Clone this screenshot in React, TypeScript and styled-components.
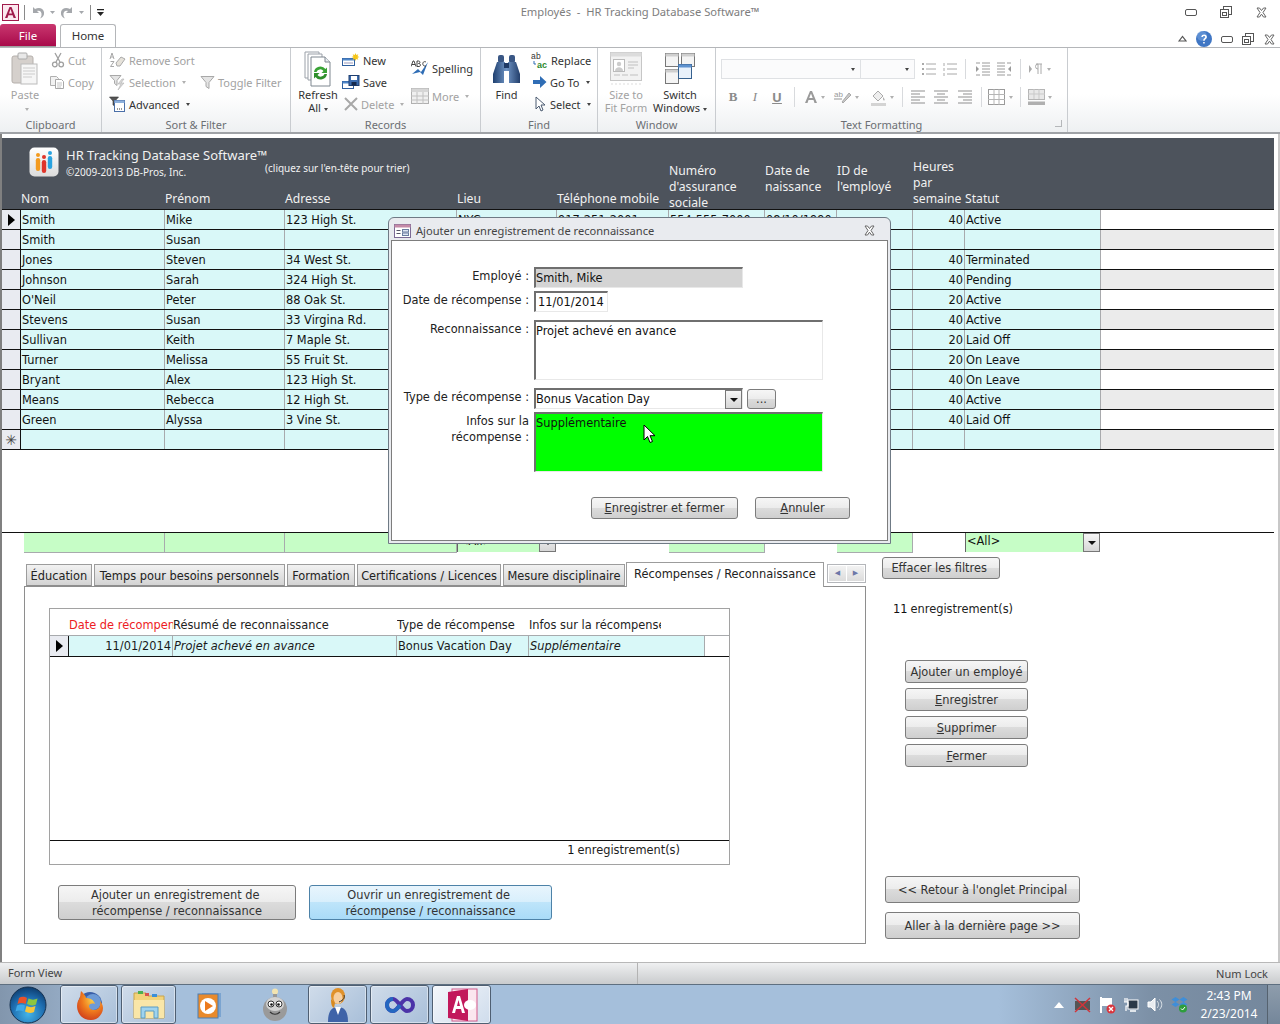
import React from "react";
import styled, { createGlobalStyle } from "styled-components";

const COLUMNS = "19px 144px 120px 172px 100px 112px 96px 72px 76px 52px 136px 1fr";
const FONT = `"DejaVu Sans", "Noto Sans", sans-serif`;
const UI_FONT = `"Noto Sans", "DejaVu Sans", sans-serif`;

const GlobalStyle = createGlobalStyle`
  html, body { margin: 0; padding: 0; background: #fff; }
  * { box-sizing: border-box; }
  body { font-family: ${FONT}; font-size: 11.4px; color: #1a1a1a; }
`;

const Screen = styled.div`
  position: relative;
  width: 1280px;
  height: 1024px;
  overflow: hidden;
  display: flex;
  flex-direction: column;
  background: #fff;
`;

/* ---------- title bar + ribbon ---------- */

const TitleBar = styled.div`
  height: 24px;
  flex: none;
  display: grid;
  grid-template-columns: 200px 1fr 200px;
  align-items: center;
`;

const Qat = styled.div`
  display: flex;
  align-items: center;
  padding-left: 2px;
  gap: 3px;
`;

const QatSep = styled.span`
  width: 1px;
  height: 15px;
  background: #8a8a8a;
  margin: 0 2px;
`;

const Title = styled.div`
  text-align: center;
  color: #7d7d7d;
  font-family: ${UI_FONT};
  font-size: 11.2px;
  padding-bottom: 2px;
`;

const WinControls = styled.div<{ $gap: number; $right: number }>`
  display: flex;
  justify-content: flex-end;
  align-items: center;
  gap: ${(p) => p.$gap}px;
  padding-right: ${(p) => p.$right}px;
`;

const TabRow = styled.div`
  height: 23px;
  flex: none;
  display: flex;
  align-items: flex-end;
  justify-content: space-between;
`;

const TabGroup = styled.div`
  display: flex;
  align-items: flex-end;
  height: 100%;
`;

const FileTab = styled.div`
  width: 56px;
  height: 23px;
  background: linear-gradient(#c9376f, #a80a4a);
  color: #fff;
  font-family: ${UI_FONT};
  font-size: 11.5px;
  border-radius: 3px 3px 0 0;
  text-align: center;
  line-height: 24px;
  margin-right: 4px;
  border-bottom: 1px solid #a0a0a0;
`;

const HomeTab = styled.div`
  width: 56px;
  height: 24px;
  background: #fff;
  border: 1px solid #b4b6b9;
  border-bottom: none;
  border-radius: 3px 3px 0 0;
  text-align: center;
  font-family: ${UI_FONT};
  font-size: 11.5px;
  line-height: 21px;
  color: #333;
  margin-bottom: -1px;
`;

const Ribbon = styled.div`
  height: 87px;
  flex: none;
  display: flex;
  font-family: ${UI_FONT};
  background: linear-gradient(#fff 55%, #eef0f2);
  border-top: 1px solid #b4b6b9;
  border-bottom: 2px solid #a0a3a7;
`;

const Group = styled.div<{ $w: number }>`
  width: ${(p) => p.$w}px;
  height: 84px;
  border-right: 1px solid #c9ccd0;
  display: flex;
  flex-direction: column;
  padding-top: 1px;
`;

const GroupBody = styled.div<{ $pad?: number }>`
  height: 67px;
  flex: none;
  display: flex;
  padding-left: ${(p) => p.$pad ?? 0}px;
`;

const GroupLabel = styled.div<{ $shift?: number }>`
  height: 16px;
  text-align: center;
  color: #6c6f73;
  font-size: 11px;
  line-height: 17px;
  padding-right: ${(p) => p.$shift ?? 0}px;
  position: relative;
`;

const BigBtn = styled.div<{ $w: number; $off?: boolean }>`
  width: ${(p) => p.$w}px;
  display: flex;
  flex-direction: column;
  align-items: center;
  font-size: 11px;
  line-height: 13px;
  color: ${(p) => (p.$off ? "#a2a2a2" : "#333")};
  text-align: center;
  white-space: nowrap;
`;

const BigIcon = styled.div`
  height: 39px;
  display: flex;
  align-items: center;
  justify-content: center;
`;

const SmallCol = styled.div<{ $w: number; $top?: number }>`
  width: ${(p) => p.$w}px;
  padding-top: ${(p) => p.$top ?? 0}px;
  display: flex;
  flex-direction: column;
`;

const SmallBtn = styled.div<{ $off?: boolean; $h?: number; $indent?: number }>`
  height: ${(p) => p.$h ?? 22}px;
  padding-left: ${(p) => p.$indent ?? 0}px;
  display: flex;
  align-items: center;
  gap: 3px;
  font-size: 11px;
  white-space: nowrap;
  color: ${(p) => (p.$off ? "#a2a2a2" : "#333")};
`;

const Caret = styled.span<{ $off?: boolean }>`
  display: inline-block;
  width: 0;
  height: 0;
  margin-left: 3px;
  border-left: 2.5px solid transparent;
  border-right: 2.5px solid transparent;
  border-top: 3px solid ${(p) => (p.$off ? "#b0b0b0" : "#444")};
  vertical-align: middle;
`;

const FormatCol = styled.div`
  display: flex;
  flex-direction: column;
  padding: 10px 0 0 5px;
  gap: 8px;
`;

const FormatRow = styled.div`
  display: flex;
  align-items: center;
  height: 20px;
`;

const FontBox = styled.div<{ $w: number }>`
  width: ${(p) => p.$w}px;
  height: 20px;
  border: 1px solid #dfe1e4;
  background: #fbfbfc;
  display: flex;
  align-items: center;
  justify-content: flex-end;
  padding-right: 5px;
  margin-right: -1px;
`;

const ToolSpace = styled.span<{ $w: number }>`
  width: ${(p) => p.$w}px;
  flex: none;
`;

const ToolSep = styled.span`
  width: 1px;
  height: 20px;
  background: #d8dadd;
`;

const ToolGlyph = styled.span<{ $w?: number; $serif?: boolean; $italic?: boolean; $under?: boolean }>`
  width: ${(p) => p.$w ?? 22}px;
  text-align: center;
  color: #8b8b8b;
  font-family: ${(p) => (p.$serif ? `"Liberation Serif", serif` : UI_FONT)};
  font-weight: ${(p) => (p.$italic ? 400 : 700)};
  font-style: ${(p) => (p.$italic ? "italic" : "normal")};
  text-decoration: ${(p) => (p.$under ? "underline" : "none")};
  font-size: 13px;
`;

const DialogLauncher = styled.span`
  position: absolute;
  right: 5px;
  top: 4px;
  width: 7px;
  height: 7px;
  border-right: 1px solid #b5b7ba;
  border-bottom: 1px solid #b5b7ba;
`;

/* ---------- main form ---------- */

const FormFrame = styled.div`
  flex: 1;
  min-height: 0;
  display: flex;
  flex-direction: column;
  padding: 4px 4px 0 0;
  border-left: 2px solid #808080;
  border-right: 2px solid #c8c8c8;
  background: #fff;
`;

const Header = styled.div`
  height: 72px;
  flex: none;
  display: grid;
  grid-template-columns: ${COLUMNS};
  grid-template-rows: 1fr;
  background: #4d535c;
  color: #f1f1f1;
`;

const Brand = styled.div`
  grid-column: 1 / 7;
  grid-row: 1;
  align-self: start;
  display: flex;
  padding: 9px 0 0 27px;
  font-family: ${UI_FONT};
`;

const BrandText = styled.div`
  width: 199px;
  margin-left: 7px;
  white-space: nowrap;
`;

const BrandName = styled.div`
  font-size: 13px;
  line-height: 17px;
`;

const BrandCopy = styled.div`
  font-size: 10px;
  line-height: 15px;
  margin-top: 1px;
`;

const SortHint = styled.div`
  font-size: 10px;
  margin-top: 14px;
  white-space: nowrap;
`;

const HeadLabel = styled.div<{ $col: number; $bottom: number }>`
  grid-column: ${(p) => p.$col};
  grid-row: 1;
  align-self: end;
  margin-bottom: ${(p) => p.$bottom}px;
  line-height: 16px;
  white-space: nowrap;
  font-family: ${UI_FONT};
  font-size: 12.2px;
`;

const Row = styled.div`
  display: grid;
  grid-template-columns: ${COLUMNS};
  height: 20px;
  flex: none;
  border-bottom: 1px solid #111;
`;

const RowHeadTop = styled(Row)`
  box-shadow: 0 -1px 0 #111;
`;

const Selector = styled.div`
  background: #e9ebf1;
  border-right: 1px solid #111;
  display: flex;
  align-items: center;
  justify-content: center;
  color: #444;
  font-size: 14px;
`;

const Cell = styled.div<{ $right?: boolean }>`
  background: #d9f8f8;
  border-right: 1px solid #a8aaad;
  padding: 0 1px;
  line-height: 21px;
  white-space: nowrap;
  overflow: hidden;
  text-align: ${(p) => (p.$right ? "right" : "left")};
  color: #111;
`;

const Filler = styled.div<{ $grey: boolean }>`
  background: ${(p) => (p.$grey ? "#ebebeb" : "#fff")};
`;

const Blank = styled.div`
  height: 82px;
  flex: none;
`;

const FilterRow = styled.div`
  display: grid;
  grid-template-columns: ${COLUMNS};
  height: 21px;
  flex: none;
  border-top: 1px solid #111;
`;

const FilterCell = styled.div<{ $col: number; $inset?: number }>`
  grid-column: ${(p) => p.$col};
  margin-left: ${(p) => p.$inset ?? 0}px;
  background: #c6fdc6;
  border-right: 1px solid #a8aaad;
  border-bottom: 1px solid #a8aaad;
`;

const FilterCombo = styled.div<{ $col: number }>`
  grid-column: ${(p) => p.$col};
  display: flex;
  background: #c6fdc6;
  border-left: 1px solid #666;
  height: 19px;
  line-height: 17px;
  padding-left: 1px;
  margin-right: 1px;
  justify-content: space-between;
  color: #111;
`;

const DropBtn = styled.span`
  width: 17px;
  height: 19px;
  border: 1px solid #777;
  background: linear-gradient(#f6f6f6, #d6d6d6);
  display: flex;
  align-items: center;
  justify-content: center;
  flex: none;
  &::after {
    content: "";
    border-left: 4px solid transparent;
    border-right: 4px solid transparent;
    border-top: 4px solid #111;
  }
`;

const Lower = styled.div`
  display: flex;
  padding: 4px 0 0 22px;
`;

const LeftPane = styled.div`
  width: 842px;
  padding-top: 4px;
  margin-right: 16px;
`;

const TabStrip = styled.div`
  height: 25px;
  display: flex;
  align-items: flex-end;
  padding-left: 2px;
  position: relative;
`;

const SheetTab = styled.div<{ $w: number }>`
  width: ${(p) => p.$w}px;
  height: 22px;
  margin-right: 2px;
  border: 1px solid #9c9c9c;
  border-bottom: 1px solid #8e8e8e;
  background: linear-gradient(#f2f2f2, #d4d4d4);
  text-align: center;
  line-height: 22px;
  white-space: nowrap;
  color: #222;
`;

const ActiveTab = styled.div<{ $w: number }>`
  width: ${(p) => p.$w}px;
  height: 25px;
  border: 1px solid #9c9c9c;
  border-bottom: none;
  background: #fff;
  text-align: center;
  line-height: 23px;
  margin-left: -1px;
  margin-bottom: -1px;
  position: relative;
  z-index: 1;
  white-space: nowrap;
  color: #222;
`;

const TabScroll = styled.div`
  display: flex;
  margin: 0 0 3px 3px;
  border: 1px solid #b4b6ba;
  padding: 1px;
  gap: 1px;
`;

const ScrollBtn = styled.span`
  width: 17px;
  height: 15px;
  background: linear-gradient(#f2f2f2, #dcdcdc);
  color: #6d78a8;
  font-size: 7px;
  text-align: center;
  line-height: 15px;
`;

const Panel = styled.div`
  height: 358px;
  border: 1px solid #8e8e8e;
  padding: 21px 0 0 24px;
`;

const SubForm = styled.div`
  width: 681px;
  height: 257px;
  border: 1px solid #a2a2a2;
  display: flex;
  flex-direction: column;
`;

const SubHead = styled.div`
  height: 27px;
  flex: none;
  display: flex;
  align-items: flex-end;
  border-bottom: 1px solid #a8aaad;
  padding-left: 19px;
  line-height: 20px;
`;

const SubLabel = styled.div<{ $w: number; $red?: boolean }>`
  width: ${(p) => p.$w}px;
  white-space: nowrap;
  overflow: hidden;
  color: ${(p) => (p.$red ? "#ed1c24" : "#222")};
`;

const SubRow = styled.div`
  height: 21px;
  flex: none;
  display: flex;
  border-bottom: 1px solid #111;
`;

const SubSel = styled.div`
  width: 19px;
  background: #e9ebf1;
  border-right: 1px solid #111;
  display: flex;
  align-items: center;
  justify-content: center;
`;

const SubCell = styled.div<{ $w: number; $right?: boolean; $italic?: boolean }>`
  width: ${(p) => p.$w}px;
  background: #d9f8f8;
  border-right: 1px solid #a8aaad;
  padding: 0 1px;
  line-height: 21px;
  white-space: nowrap;
  overflow: hidden;
  font-style: ${(p) => (p.$italic ? "italic" : "normal")};
  text-align: ${(p) => (p.$right ? "right" : "left")};
`;

const SubSpace = styled.div`
  flex: 1;
  border-bottom: 1px solid #111;
`;

const SubFoot = styled.div`
  height: 23px;
  flex: none;
  padding: 0 49px 0 0;
  text-align: right;
  line-height: 18px;
  color: #222;
`;

const RecordCount = styled.span`
  color: #111;
  margin-right: 3px;
`;

const Btn = styled.div<{ $w: number; $h: number; $blue?: boolean }>`
  width: ${(p) => p.$w}px;
  height: ${(p) => p.$h}px;
  flex: none;
  display: flex;
  align-items: center;
  justify-content: center;
  text-align: center;
  line-height: 16px;
  border-radius: 3px;
  color: #333;
  white-space: pre;
  border: 1px solid ${(p) => (p.$blue ? "#4d82a8" : "#7c7c7c")};
  background: ${(p) =>
    p.$blue
      ? "linear-gradient(#e8f5fd, #d8effc 48%, #bfe5fa 48%, #a9dbf8)"
      : "linear-gradient(#f6f6f6, #ececec 48%, #dcdcdc 48%, #cfcfcf)"};
`;

const ActionRow = styled.div`
  display: flex;
  gap: 13px;
  padding: 20px 0 0 9px;
`;

const RightPane = styled.div`
  display: flex;
  flex-direction: column;
`;

const CountLine = styled.div`
  margin: 21px 0 0 11px;
  line-height: 18px;
  color: #222;
`;

const StackCol = styled.div<{ $top: number; $left: number; $gap: number }>`
  display: flex;
  flex-direction: column;
  margin: ${(p) => p.$top}px 0 0 ${(p) => p.$left}px;
  gap: ${(p) => p.$gap}px;
`;

/* ---------- status + taskbar ---------- */

const StatusBar = styled.div`
  height: 22px;
  flex: none;
  display: flex;
  justify-content: space-between;
  align-items: center;
  padding: 0 12px 0 8px;
  font-family: ${UI_FONT};
  font-size: 11px;
  color: #444;
  border-top: 1px solid #b8b8b8;
  background: linear-gradient(#eff0f1, #c9cbcd);
`;

const StatusLeft = styled.div`
  width: 630px;
  height: 100%;
  line-height: 20px;
  border-right: 1px solid #b3b3b3;
`;

const Taskbar = styled.div`
  height: 40px;
  flex: none;
  display: flex;
  align-items: stretch;
  background: linear-gradient(90deg, #a5bfdb 0 78%, #7c90a6 90%, #74879c);
  border-top: 1px solid #5e6f80;
`;

const StartSlot = styled.div`
  width: 60px;
  display: flex;
  align-items: center;
  justify-content: center;
  padding-right: 4px;
  background: linear-gradient(90deg, #8296ad, #93a9c2);
`;

const TaskBtn = styled.div<{ $w: number; $gap?: number; $plain?: boolean; $active?: boolean }>`
  width: ${(p) => p.$w}px;
  margin-right: ${(p) => p.$gap ?? 3}px;
  display: flex;
  align-items: center;
  justify-content: center;
  border-radius: 3px;
  ${(p) =>
    p.$plain
      ? ""
      : `border: 1px solid #4f5f72; box-shadow: inset 0 0 0 1px rgba(255,255,255,.45);
         background: ${
           p.$active
             ? "linear-gradient(135deg,#f4f7fb,#cfdcec)"
             : "linear-gradient(135deg,#d0dcea,#a8bfd9)"
         };`}
`;

const Tray = styled.div`
  margin-left: auto;
  display: flex;
  align-items: center;
`;

const TrayIcon = styled.div<{ $w: number }>`
  width: ${(p) => p.$w}px;
  display: flex;
  justify-content: center;
`;

const Clock = styled.div`
  width: 76px;
  text-align: center;
  color: #fff;
  font-family: ${UI_FONT};
  font-size: 12px;
  line-height: 18px;
`;

const ShowDesktop = styled.div`
  width: 13px;
  align-self: stretch;
  border-left: 1px solid #55626f;
  background: linear-gradient(#8e9dac, #74869a);
`;

/* ---------- dialog ---------- */

const Dialog = styled.div`
  position: absolute;
  left: 388px;
  top: 217px;
  width: 503px;
  height: 327px;
  border: 1px solid #6f7a85;
  border-radius: 6px 6px 0 0;
  background: #e9ebef;
  padding: 0 2px 2px;
  display: flex;
  flex-direction: column;
`;

const DialogTitle = styled.div`
  height: 22px;
  flex: none;
  display: flex;
  align-items: center;
  padding: 3px 12px 0 3px;
  gap: 5px;
  color: #444;
  font-family: ${UI_FONT};
  font-size: 11.1px;
`;

const DialogName = styled.span`
  flex: 1;
`;

const DialogBody = styled.div`
  flex: 1;
  background: #fff;
  border: 1px solid #7d7d7d;
  padding-top: 26px;
  display: grid;
  grid-template-columns: 139px 1fr;
  align-content: start;
`;

const FieldLabel = styled.div<{ $top?: number }>`
  text-align: right;
  margin-top: ${(p) => p.$top ?? 0}px;
  padding: 1px 2px 0 0;
  line-height: 16px;
  white-space: pre-line;
  color: #222;
`;

const FieldWrap = styled.div<{ $top?: number }>`
  margin: ${(p) => p.$top ?? 0}px 0 0 3px;
  display: flex;
  gap: 4px;
`;

const Field = styled.div<{ $w: number; $h: number; $bg?: string; $bare?: boolean }>`
  width: ${(p) => p.$w}px;
  height: ${(p) => p.$h}px;
  background: ${(p) => p.$bg ?? "#fff"};
  border-style: solid;
  border-width: 2px 1px 1px 2px;
  border-color: #6f6f6f #e8e8e8 #e8e8e8 #6f6f6f;
  padding: 1px 0 0 ${(p) => (p.$bare ? 2 : 0)}px;
  line-height: 16px;
  color: #111;
  display: flex;
  justify-content: space-between;
`;

const FieldDrop = styled(DropBtn)`
  margin-top: -1px;
`;

const DotsBtn = styled(Btn)`
  margin-top: 1px;
  line-height: 12px;
`;

const DialogActions = styled.div`
  grid-column: 1 / 3;
  display: flex;
  gap: 17px;
  padding: 25px 0 0 199px;
`;

const CursorSlot = styled.div`
  position: absolute;
  left: 643px;
  top: 424px;
  line-height: 0;
`;

/* ---------- icons ---------- */

const AccessLogo = () => (
  <svg width="17" height="17" viewBox="0 0 17 17">
    <rect x="0.5" y="0.5" width="16" height="16" fill="#fbe8ef" stroke="#a01b4c" />
    <path d="M3 14 7.5 3h2L14 14h-2.4l-1-2.8H6.4L5.4 14zM7 9.4h3L8.5 5z" fill="#a01b4c" />
  </svg>
);

const UndoIcon = ({ flip }: { flip?: boolean }) => (
  <svg width="16" height="15" viewBox="0 0 16 15" style={flip ? { transform: "scaleX(-1)" } : undefined}>
    <path d="M3 2v6h6L7 6c3-1 5 1 4.500 4.500-.2 1-.7 2-1.500 3 3-1 4.500-3.500 4-6.500C13 3 9 2 5 4z" fill="#a5a8ac" />
  </svg>
);

const MiniCaret = () => (
  <svg width="7" height="5" viewBox="0 0 7 5">
    <path d="M1 1h5L3.500 4z" fill="#a5a8ac" />
  </svg>
);

const QatMenu = () => (
  <svg width="9" height="10" viewBox="0 0 9 10">
    <path d="M1 2h7v1.300H1zM1 5h7L4.500 9z" fill="#222" />
  </svg>
);

const MinGlyph = () => (
  <svg width="12" height="7" viewBox="0 0 12 7">
    <rect x="0.5" y="0.5" width="11" height="6" rx="1.500" fill="#fff" stroke="#555" />
  </svg>
);

const RestoreGlyph = () => (
  <svg width="12" height="12" viewBox="0 0 12 12">
    <rect x="3.500" y="0.500" width="8" height="8" fill="#fff" stroke="#555" />
    <rect x="0.500" y="3.500" width="8" height="8" fill="#fff" stroke="#555" />
    <rect x="2.500" y="6.500" width="4" height="3" fill="none" stroke="#555" />
  </svg>
);

const CloseGlyph = () => (
  <svg width="13" height="11" viewBox="0 0 13 11">
    <path d="M2 1h2.500l2 2.500 2-2.500H11L8 5.500l3 4.500H8.500l-2-2.800-2 2.800H2l3-4.500z" fill="#fff" stroke="#666" />
  </svg>
);

const HelpGlyph = () => (
  <svg width="16" height="16" viewBox="0 0 16 16">
    <circle cx="8" cy="8" r="8" fill="#3f76c4" />
    <circle cx="6" cy="5" r="5" fill="#7ba7e2" opacity=".5" />
    <path d="M5.300 6c0-3.300 5.600-3.300 5.600 0 0 2-2.200 2-2.200 3.800H7.200c0-2.500 2-2.500 2-3.800 0-1.300-2.300-1.300-2.300 0zM7.200 11h1.500v1.600H7.200z" fill="#fff" />
  </svg>
);

const CollapseGlyph = () => (
  <svg width="9" height="8" viewBox="0 0 9 8">
    <path d="M1 6 4.500 1.500 8 6z" fill="none" stroke="#555" strokeWidth="1.200" />
  </svg>
);

const PasteIcon = () => (
  <svg width="28" height="34" viewBox="0 0 28 34">
    <rect x="1" y="4" width="21" height="27" rx="2" fill="#d5d0cc" stroke="#b5b0ac" />
    <rect x="7" y="1" width="9" height="6" rx="1" fill="#e8e8e8" stroke="#aaa" />
    <rect x="10" y="12" width="16" height="20" fill="#f6f6f6" stroke="#bbb" />
    <path d="M12 16h12M12 19h12M12 22h12M12 25h9" stroke="#ccc" />
  </svg>
);

const ScissorsIcon = () => (
  <svg width="14" height="16" viewBox="0 0 14 16">
    <path d="M4 1l5 9M10 1 5 10" stroke="#a0a0a0" strokeWidth="1.300" fill="none" />
    <circle cx="3.800" cy="12.500" r="2.300" fill="none" stroke="#a0a0a0" strokeWidth="1.300" />
    <circle cx="10.200" cy="12.500" r="2.300" fill="none" stroke="#a0a0a0" strokeWidth="1.300" />
  </svg>
);

const CopyIcon = () => (
  <svg width="16" height="15" viewBox="0 0 16 15">
    <path d="M1.500 1.500h6l2 2v7h-8z" fill="#f2f2f2" stroke="#b0b0b0" />
    <path d="M6.500 4.500h6l2 2v7h-8z" fill="#fff" stroke="#a8a8a8" />
    <path d="M8 8h5M8 10h5M8 12h4" stroke="#c4c4c4" />
  </svg>
);

const RemoveSortIcon = () => (
  <svg width="17" height="17" viewBox="0 0 17 17">
    <path d="M1 7 3 1l2 6M1.800 5h2.400M1.500 9.500h3.500l-3.500 5h3.500" stroke="#a8a8a8" fill="none" />
    <path d="M7 11l5-6 4 2-5 7H8z" fill="#e6e2da" stroke="#aaa" />
  </svg>
);

const FilterGlyph = () => (
  <svg width="15" height="15" viewBox="0 0 15 15">
    <path d="M1 1.500h13L9 7.500v6l-3-2v-4z" fill="#e4e4e4" stroke="#a8a8a8" />
  </svg>
);

const SelectionIcon = () => (
  <svg width="17" height="17" viewBox="0 0 17 17">
    <path d="M1 1.500h11L8 6.500v5l-2.500-2V6.500z" fill="#e4e4e4" stroke="#a8a8a8" />
    <path d="M13 5 9 10h3l-3 6 6-7h-3l3-4z" fill="#d9d9d9" stroke="#b0b0b0" strokeWidth=".6" />
  </svg>
);

const AdvancedIcon = () => (
  <svg width="17" height="17" viewBox="0 0 17 17">
    <path d="M0.500 1h9L6 5v5L4 9V5z" fill="#555" stroke="#333" strokeWidth=".6" />
    <rect x="5.500" y="4.500" width="10" height="11" fill="#fff" stroke="#4a6fa8" />
    <rect x="5.500" y="4.500" width="10" height="2.500" fill="#8db0dc" />
    <path d="M8 13h1M10 13h1M12 13h1" stroke="#333" />
  </svg>
);

const RefreshIcon = () => (
  <svg width="28" height="36" viewBox="0 0 28 36">
    <path d="M1 1h14v26H1z" fill="#fff" stroke="#9aa0a8" />
    <path d="M4 3h14v26H4z" fill="#fff" stroke="#9aa0a8" />
    <path d="M7 6h14l5 5v24H7z" fill="#fff" stroke="#7f8790" />
    <path d="M21 6v5h5" fill="#e8ecf0" stroke="#7f8790" />
    <path d="M10 21a6.500 6.500 0 0 1 11.500-3l1.500-1.500v5.500h-5.500l2-2a4 4 0 0 0-7 1z" fill="#39a335" />
    <path d="M23 23a6.500 6.500 0 0 1-11.500 3L10 27.500V22h5.500l-2 2a4 4 0 0 0 7-1z" fill="#2f8f2c" />
  </svg>
);

const NewIcon = () => (
  <svg width="18" height="14" viewBox="0 0 18 14">
    <rect x="0.500" y="5.500" width="12" height="7" fill="#fff" stroke="#2f5f9e" />
    <rect x="0.500" y="5.500" width="12" height="2" fill="#4f86c8" />
    <path d="M2 10h9" stroke="#99b" />
    <path d="M13.500 0l.8 2 2-.8-.8 2 2 .8-2 .8.8 2-2-.8-.8 2-.8-2-2 .8.800-2-2-.8 2-.8-.8-2 2 .8z" fill="#f5c518" />
  </svg>
);

const SaveIcon = () => (
  <svg width="18" height="15" viewBox="0 0 18 15">
    <rect x="0.500" y="6.500" width="11" height="7" fill="#fff" stroke="#2f5f9e" />
    <rect x="0.500" y="6.500" width="11" height="2" fill="#4f86c8" />
    <rect x="7" y="0.500" width="10" height="10" fill="#3a6cb0" stroke="#1f3f70" />
    <rect x="9" y="1" width="6" height="4" fill="#fff" />
    <rect x="9.500" y="7" width="5" height="3.500" fill="#15294d" />
  </svg>
);

const DeleteIcon = () => (
  <svg width="14" height="14" viewBox="0 0 14 14">
    <path d="M1 1l12 12M13 1 1 13" stroke="#a8a8a8" strokeWidth="2" />
  </svg>
);

const SpellIcon = () => (
  <svg width="18" height="17" viewBox="0 0 18 17">
    <path d="M1 14 7 9l3 3 7-10-5 13-3-3z" fill="#2f6db5" />
    <path d="M0 6.500 2 1h1l2 5.500M1 4.500h3M6 1v5.500h2c2 0 2-3-.5-3 2 0 1.800-2.500 0-2.500zM15 2c-4-2-4.500 5 0 4" stroke="#333" fill="none" strokeWidth=".9" />
  </svg>
);

const MoreIcon = () => (
  <svg width="18" height="16" viewBox="0 0 18 16">
    <rect x="0.500" y="0.500" width="17" height="15" fill="#f0f0f0" stroke="#b0b0b0" />
    <rect x="0.500" y="0.500" width="17" height="3.500" fill="#d6d6d6" />
    <path d="M0 8h18M0 12h18M6 4v12M12 4v12" stroke="#c0c0c0" />
  </svg>
);

const BinocularsIcon = () => (
  <svg width="29" height="30" viewBox="0 0 29 30">
    <defs>
      <linearGradient id="bino" x1="0" x2="1">
        <stop offset="0" stopColor="#1f4070" />
        <stop offset=".5" stopColor="#6f94c4" />
        <stop offset="1" stopColor="#233f6c" />
      </linearGradient>
    </defs>
    <rect x="6" y="1" width="6" height="8" rx="2" fill="#3a5785" />
    <rect x="17" y="1" width="6" height="8" rx="2" fill="#3a5785" />
    <path d="M5 8h8v5h3V8h8l4 12v9H17V17h-5v12H1v-9z" fill="url(#bino)" />
    <rect x="12" y="9" width="5" height="5" fill="#1f3a66" />
  </svg>
);

const ReplaceIcon = () => (
  <svg width="17" height="18" viewBox="0 0 17 18">
    <text x="0" y="8" fontSize="8.500" fill="#333" fontFamily="Liberation Sans">a</text>
    <text x="5" y="8" fontSize="8.500" fill="#333" fontFamily="Liberation Sans">b</text>
    <path d="M3 10v3h2" stroke="#2f6db5" fill="none" />
    <text x="6" y="17" fontSize="9" fontWeight="700" fill="#2d8a2d" fontFamily="Liberation Sans">ac</text>
  </svg>
);

const GoToIcon = () => (
  <svg width="14" height="12" viewBox="0 0 14 12">
    <path d="M0 4h7V0l6.500 6L7 12V8H0z" fill="#2f6db5" />
  </svg>
);

const SelectIcon = () => (
  <svg width="12" height="16" viewBox="0 0 12 16">
    <path d="M1 1v12l3-3 2 5 2-1-2-5h4z" fill="#fff" stroke="#4a5a70" />
  </svg>
);

const SizeFitIcon = () => (
  <svg width="32" height="34" viewBox="0 0 32 34">
    <rect x="0.500" y="0.500" width="31" height="28" fill="#f2f2f2" stroke="#c6c6c6" />
    <rect x="0.500" y="0.500" width="31" height="4" fill="#dcdcdc" />
    <rect x="3.500" y="7.500" width="11" height="12" fill="#fff" stroke="#bbb" />
    <circle cx="9" cy="12" r="2.200" fill="#ccc" />
    <path d="M5 19c0-5 8-5 8 0z" fill="#ccc" />
    <path d="M18 10h10M18 13h10M18 16h6M4 23h6M12 23h6M20 23h8" stroke="#c0c0c0" />
    <path d="M1 32h30" stroke="#ddd" strokeDasharray="2 2" />
  </svg>
);

const SwitchIcon = () => (
  <svg width="30" height="32" viewBox="0 0 30 32">
    <rect x="0.500" y="0.500" width="13" height="13" fill="#f4f4f4" stroke="#777" />
    <rect x="0.500" y="0.500" width="13" height="3" fill="#cfcfcf" />
    <rect x="16.500" y="0.500" width="13" height="13" fill="#f4f4f4" stroke="#777" />
    <rect x="16.500" y="0.500" width="13" height="3" fill="#cfcfcf" />
    <rect x="0.500" y="16.500" width="13" height="14" fill="#f4f4f4" stroke="#777" />
    <rect x="0.500" y="16.500" width="13" height="3" fill="#cfcfcf" />
    <rect x="13.500" y="11.500" width="13" height="14" fill="#e8f1fb" stroke="#36618f" />
    <rect x="13.500" y="11.500" width="13" height="3" fill="#5e92cf" />
  </svg>
);

const ListGlyph = ({ numbered }: { numbered?: boolean }) => (
  <svg width="16" height="15" viewBox="0 0 16 15">
    {numbered ? <path d="M2 1v3M2 6v3M2 11v3" stroke="#aaa" /> : <path d="M1 2h2M1 7h2M1 12h2" stroke="#aaa" strokeWidth="2" />}
    <path d="M5 2h10M5 7h10M5 12h10" stroke="#a8a8a8" />
  </svg>
);

const IndentGlyph = ({ flip }: { flip?: boolean }) => (
  <svg width="16" height="15" viewBox="0 0 16 15" style={flip ? { transform: "scaleX(-1)" } : undefined}>
    <path d="M7 1h8M7 4h8M7 7h8M7 10h8M7 13h8M1 1h4M1 13h4" stroke="#9a9a9a" />
    <path d="M1 4l3 3-3 3z" fill="#9a9a9a" />
  </svg>
);

const ParaGlyph = () => (
  <svg width="16" height="12" viewBox="0 0 16 12">
    <path d="M1 2l3 4-3 4z" fill="#aaa" />
    <path d="M8 1h6M10 1v10M13 1v10M10 1a2.500 2.500 0 0 0 0 5" stroke="#aaa" fill="none" />
  </svg>
);

const AlignGlyph = ({ mode }: { mode: "l" | "c" | "r" }) => {
  const short = mode === "l" ? "M1 4h9M1 10h9" : mode === "c" ? "M4 4h8M4 10h8" : "M6 4h9M6 10h9";
  return (
    <svg width="16" height="14" viewBox="0 0 16 14">
      <path d={`M1 1h14M1 7h14M1 13h14 ${short}`} stroke="#8f8f8f" />
    </svg>
  );
};

const GridGlyph = () => (
  <svg width="18" height="16" viewBox="0 0 18 16">
    <rect x="0.500" y="0.500" width="16" height="15" fill="#fff" stroke="#9a9a9a" />
    <path d="M6 0v16M11 0v16M0 5.500h17M0 10.500h17" stroke="#b5b5b5" />
  </svg>
);

const AltGridGlyph = () => (
  <svg width="17" height="16" viewBox="0 0 17 16">
    <rect x="0.500" y="0.500" width="16" height="10" fill="#e8e8e8" stroke="#b5b5b5" />
    <path d="M6 0v10M11 0v10M0 5h17" stroke="#c9c9c9" />
    <rect x="0" y="12.500" width="17" height="3.500" fill="#b0b0b0" />
  </svg>
);

const FontColorGlyph = () => (
  <svg width="14" height="15" viewBox="0 0 14 15">
    <path d="M1 13 6 1h2l5 12h-2.500l-1-3H4.500l-1 3zM5.200 8h3.500L7 3.500z" fill="#9a9a9a" />
  </svg>
);

const HighlightGlyph = () => (
  <svg width="18" height="15" viewBox="0 0 18 15">
    <text x="0" y="7" fontSize="8" fill="#999" fontFamily="Liberation Sans">ab</text>
    <path d="M8 12 15 3l2 2-8 8z" fill="#c8c8c8" stroke="#aaa" />
    <path d="M0 9h8" stroke="#c9c9c9" strokeWidth="2" />
  </svg>
);

const BucketGlyph = () => (
  <svg width="17" height="17" viewBox="0 0 17 17">
    <path d="M3 7l5-5 5 5-5 5z" fill="#eee" stroke="#aaa" />
    <path d="M13 8c2 2 2 3.500 1 3.500s-1-1.500-1-3.500z" fill="#aaa" />
    <rect x="1" y="14" width="15" height="3" fill="#d4d4d4" />
  </svg>
);

const LogoIcon = () => (
  <svg width="30" height="30" viewBox="0 0 30 30">
    <defs>
      <linearGradient id="tile" x1="0" y1="0" x2="0" y2="1">
        <stop offset="0" stopColor="#fff" />
        <stop offset="1" stopColor="#dcdcdc" />
      </linearGradient>
    </defs>
    <rect x="0.500" y="0.500" width="29" height="29" rx="5" fill="url(#tile)" />
    <circle cx="9" cy="8" r="2" fill="#f39a1e" />
    <rect x="6.800" y="11" width="4.400" height="13" rx="2.200" fill="#f39a1e" />
    <circle cx="15" cy="10" r="2" fill="#e0352b" />
    <rect x="12.800" y="13" width="4.400" height="13" rx="2.200" fill="#e0352b" />
    <circle cx="21" cy="6" r="2" fill="#2aa3e0" />
    <rect x="18.800" y="9" width="4.400" height="13" rx="2.200" fill="#2aa3e0" />
  </svg>
);

const RowArrow = () => (
  <svg width="7" height="12" viewBox="0 0 7 12">
    <path d="M0 0l7 6-7 6z" fill="#000" />
  </svg>
);

const FormGlyph = () => (
  <svg width="17" height="14" viewBox="0 0 17 14">
    <rect x="0.500" y="0.500" width="16" height="13" fill="#fff" stroke="#7b6a95" />
    <rect x="0.500" y="0.500" width="16" height="3" fill="#c58aa8" />
    <path d="M2.500 6.500h4M2.500 9.500h4" stroke="#556" />
    <rect x="8.500" y="5.500" width="6" height="2.500" fill="#dfe7f4" stroke="#6a7da0" />
    <rect x="8.500" y="9" width="6" height="2.500" fill="#dfe7f4" stroke="#6a7da0" />
  </svg>
);

const OrbIcon = () => (
  <svg width="38" height="38" viewBox="0 0 38 38">
    <defs>
      <radialGradient id="orb" cx=".5" cy=".75" r=".75">
        <stop offset="0" stopColor="#43b4e8" />
        <stop offset=".6" stopColor="#1e6db0" />
        <stop offset="1" stopColor="#0d3c6e" />
      </radialGradient>
    </defs>
    <circle cx="19" cy="19" r="18" fill="url(#orb)" stroke="#16314f" />
    <path d="M10 12c3-2 6-1 8 0l-1.500 6c-2-1-5-1.500-8 0z" fill="#e8522a" />
    <path d="M19.500 12.500c3 1.500 6 1.500 9 0l-1.500 6c-3 1.500-6 1-9-.5z" fill="#8cc63f" />
    <path d="M8 19.500c3-1.500 6-1 8 0l-1.500 6c-2-1-5-1.500-8 0z" fill="#3fa9e8" />
    <path d="M17.500 20c3 1.500 6 1.500 9 0L25 26c-3 1.500-6 1-9-.5z" fill="#f6c53a" />
  </svg>
);

const FirefoxIcon = () => (
  <svg width="31" height="34" viewBox="0 0 31 34">
    <defs>
      <radialGradient id="ffx" cx=".6" cy=".3" r=".8">
        <stop offset="0" stopColor="#f9d34a" />
        <stop offset=".5" stopColor="#ef7a1d" />
        <stop offset="1" stopColor="#c9341c" />
      </radialGradient>
    </defs>
    <circle cx="16" cy="16" r="12" fill="#3a5fa8" />
    <circle cx="19" cy="14" r="8" fill="#6d9ad6" />
    <path d="M7 3c-1 4 0 6-3 10-3 7 1 19 13 19 7 0 12-6 12-12 0-3-2-6-3-7 1 6-2 9-6 9-3 0-5-2-5-4s3-3 6-2c-1-4-5-6-9-6 0-2-2-4-5-7z" fill="url(#ffx)" />
  </svg>
);

const ExplorerIcon = () => (
  <svg width="34" height="32" viewBox="0 0 34 32">
    <path d="M2 4h12l2 3h16v22H2z" fill="#f2d37a" stroke="#c8a44a" />
    <rect x="6" y="2" width="5" height="3" fill="#4caf50" />
    <rect x="13" y="4" width="4" height="3" fill="#d9534f" />
    <rect x="20" y="5" width="5" height="3" fill="#3a8fd9" />
    <path d="M2 11h30v18H2z" fill="#f9e6a8" />
    <path d="M9 18h17v11h-4v-7H13v7H9z" fill="#9fd3ee" stroke="#5a9cc4" />
  </svg>
);

const WmpIcon = () => (
  <svg width="30" height="30" viewBox="0 0 30 30">
    <rect x="6" y="3" width="19" height="24" fill="#7ba4d0" />
    <rect x="2" y="4" width="20" height="24" fill="#e98a2b" stroke="#4a7fb5" />
    <circle cx="12" cy="16" r="8" fill="#fff" />
    <path d="M9 11l8 5-8 5z" fill="#ec7a1c" />
  </svg>
);

const GopherIcon = () => (
  <svg width="26" height="34" viewBox="0 0 26 34">
    <circle cx="13" cy="3.500" r="3" fill="#f3e4b0" />
    <rect x="11" y="6" width="4" height="4" fill="#999" />
    <ellipse cx="13" cy="21" rx="12" ry="12" fill="#9a9a9a" />
    <ellipse cx="13" cy="16" rx="9" ry="7" fill="#d4d4d4" />
    <circle cx="9" cy="16" r="3" fill="#fff" stroke="#333" />
    <circle cx="17" cy="16" r="3" fill="#fff" stroke="#333" />
    <circle cx="9.500" cy="16.500" r="1.300" fill="#111" />
    <circle cx="16.500" cy="16.500" r="1.300" fill="#111" />
    <path d="M8 24c3 3 7 3 10 0" stroke="#333" fill="none" strokeWidth="1.200" />
  </svg>
);

const AgentIcon = () => (
  <svg width="26" height="36" viewBox="0 0 26 36">
    <path d="M3 35c0-10 3-15 10-15s10 5 10 15z" fill="#3f63a8" />
    <path d="M10 20l3 8 3-8z" fill="#fff" />
    <ellipse cx="13" cy="9" rx="7" ry="8" fill="#e0912a" />
    <ellipse cx="13" cy="11" rx="4.500" ry="6" fill="#f7cfa0" />
    <path d="M6 12c0 6 1 8 3 9l1-5z" fill="#d88a20" />
    <path d="M19 8c1 2 0 5-5 7" stroke="#333" fill="none" />
  </svg>
);

const InfinityIcon = () => (
  <svg width="32" height="20" viewBox="0 0 32 20">
    <path d="M9 4c5 0 9 12 14 12a6 6 0 0 0 0-12c-5 0-9 12-14 12a6 6 0 0 1 0-12z" fill="none" stroke="#4b33a8" strokeWidth="4" />
    <path d="M9 4a6 6 0 0 0-6 6 6 6 0 0 0 6 6c3 0 5-3 7-6" fill="none" stroke="#2467c0" strokeWidth="4" />
  </svg>
);

const AccessTaskIcon = () => (
  <svg width="32" height="34" viewBox="0 0 32 34">
    <rect x="6" y="1" width="25" height="32" fill="#fbe6ef" stroke="#d25b8b" />
    <path d="M2 4l20-3v32L2 30z" fill="#c2185b" />
    <path d="M6 25l5-17h3l5 17h-3l-1-4h-5l-1 4zM11 18h3l-1.500-6z" fill="#fff" />
    <ellipse cx="24" cy="17" rx="6" ry="5" fill="#fff" />
  </svg>
);

const UpGlyph = () => (
  <svg width="10" height="6" viewBox="0 0 10 6">
    <path d="M0 6l5-6 5 6z" fill="#fff" />
  </svg>
);

const TrayPrinter = () => (
  <svg width="18" height="16" viewBox="0 0 18 16">
    <rect x="1" y="4" width="15" height="9" fill="#555" />
    <path d="M1 1l15 14M16 1 1 15" stroke="#d0343a" strokeWidth="1.500" />
  </svg>
);

const TrayFlag = () => (
  <svg width="17" height="18" viewBox="0 0 17 18">
    <path d="M2 1v16" stroke="#fff" strokeWidth="2" />
    <path d="M3 2h10v8H3z" fill="#fff" />
    <circle cx="12" cy="13" r="4.500" fill="#d9363e" />
    <path d="M10 11l4 4M14 11l-4 4" stroke="#fff" strokeWidth="1.300" />
  </svg>
);

const TrayNetwork = () => (
  <svg width="16" height="16" viewBox="0 0 16 16">
    <rect x="5" y="3" width="10" height="9" fill="#2b3948" stroke="#fff" />
    <path d="M2 1v4M4 1v4M1 5h4v4H3v5" stroke="#fff" strokeWidth="1.200" fill="none" />
    <path d="M7 14h6" stroke="#fff" strokeWidth="1.500" />
  </svg>
);

const TraySpeaker = () => (
  <svg width="17" height="15" viewBox="0 0 17 15">
    <path d="M1 5h3l4-4v13l-4-4H1z" fill="#e8ecf0" stroke="#fff" />
    <path d="M10 4c2 2 2 5 0 7M12.500 2.500c3 3 3 7 0 10" stroke="#dfe5ea" fill="none" />
  </svg>
);

const TrayBox = () => (
  <svg width="17" height="17" viewBox="0 0 17 17">
    <path d="M4.500 1 8.500 3.500 4.500 6 .5 3.500zM12.500 1l4 2.500-4 2.500-4-2.500zM4.500 6l4 2.500L4.500 11l-4-2.500zM12.500 6l4 2.500-4 2.500-4-2.500z" fill="#3f8ed8" />
    <circle cx="12" cy="12.500" r="4" fill="#2e9e3c" />
    <path d="M10 12.500l1.500 1.500 2.500-3" stroke="#fff" fill="none" />
  </svg>
);

const PointerIcon = () => (
  <svg width="13" height="20" viewBox="0 0 13 20">
    <path d="M1 1v15l3.500-3.500L7 18.500l2.500-1-2.500-5.800h5z" fill="#fff" stroke="#000" />
  </svg>
);

/* ---------- data ---------- */

type Employee = {
  nom: string;
  prenom: string;
  adresse: string;
  heures: string;
  statut: string;
};

const employees: Employee[] = [
  { nom: "Smith", prenom: "Mike", adresse: "123 High St.", heures: "40", statut: "Active" },
  { nom: "Smith", prenom: "Susan", adresse: "", heures: "", statut: "" },
  { nom: "Jones", prenom: "Steven", adresse: "34 West St.", heures: "40", statut: "Terminated" },
  { nom: "Johnson", prenom: "Sarah", adresse: "324 High St.", heures: "40", statut: "Pending" },
  { nom: "O'Neil", prenom: "Peter", adresse: "88 Oak St.", heures: "20", statut: "Active" },
  { nom: "Stevens", prenom: "Susan", adresse: "33 Virgina Rd.", heures: "40", statut: "Active" },
  { nom: "Sullivan", prenom: "Keith", adresse: "7 Maple St.", heures: "20", statut: "Laid Off" },
  { nom: "Turner", prenom: "Melissa", adresse: "55 Fruit St.", heures: "20", statut: "On Leave" },
  { nom: "Bryant", prenom: "Alex", adresse: "123 High St.", heures: "40", statut: "On Leave" },
  { nom: "Means", prenom: "Rebecca", adresse: "12 High St.", heures: "40", statut: "Active" },
  { nom: "Green", prenom: "Alyssa", adresse: "3 Vine St.", heures: "40", statut: "Laid Off" },
  { nom: "", prenom: "", adresse: "", heures: "", statut: "" },
];

const sheetTabs: [string, number][] = [
  ["Éducation", 66],
  ["Temps pour besoins personnels", 192],
  ["Formation", 68],
  ["Certifications / Licences", 145],
  ["Mesure disciplinaire", 122],
];

const App = () => (
  <Screen>
    <GlobalStyle />
    <TitleBar>
      <Qat>
        <AccessLogo />
        <QatSep />
        <UndoIcon />
        <MiniCaret />
        <UndoIcon flip />
        <MiniCaret />
        <QatSep />
        <QatMenu />
      </Qat>
      <Title>Employés&nbsp; -&nbsp; HR Tracking Database Software™</Title>
      <WinControls $gap={23} $right={12}>
        <MinGlyph />
        <RestoreGlyph />
        <CloseGlyph />
      </WinControls>
    </TitleBar>
    <TabRow>
      <TabGroup>
        <FileTab>File</FileTab>
        <HomeTab>Home</HomeTab>
      </TabGroup>
      <WinControls $gap={9} $right={4}>
        <CollapseGlyph />
        <HelpGlyph />
        <MinGlyph />
        <RestoreGlyph />
        <CloseGlyph />
      </WinControls>
    </TabRow>
    <Ribbon>
      <Group $w={102}>
        <GroupBody $pad={10}>
          <BigBtn $w={30} $off>
            <BigIcon>
              <PasteIcon />
            </BigIcon>
            Paste
            <div>
              <Caret $off />
            </div>
          </BigBtn>
          <SmallCol $w={60}>
            <SmallBtn $off $indent={11}>
              <ScissorsIcon />
              Cut
            </SmallBtn>
            <SmallBtn $off $indent={9}>
              <CopyIcon />
              Copy
            </SmallBtn>
          </SmallCol>
        </GroupBody>
        <GroupLabel>Clipboard</GroupLabel>
      </Group>
      <Group $w={189}>
        <GroupBody $pad={7}>
          <SmallCol $w={91}>
            <SmallBtn $off>
              <RemoveSortIcon />
              Remove Sort
            </SmallBtn>
            <SmallBtn $off>
              <SelectionIcon />
              Selection
              <Caret $off />
            </SmallBtn>
            <SmallBtn>
              <AdvancedIcon />
              Advanced
              <Caret />
            </SmallBtn>
          </SmallCol>
          <SmallCol $w={88} $top={22}>
            <SmallBtn $off>
              <FilterGlyph />
              Toggle Filter
            </SmallBtn>
          </SmallCol>
        </GroupBody>
        <GroupLabel>Sort &amp; Filter</GroupLabel>
      </Group>
      <Group $w={190}>
        <GroupBody $pad={4}>
          <BigBtn $w={46}>
            <BigIcon>
              <RefreshIcon />
            </BigIcon>
            Refresh
            <div>
              All
              <Caret />
            </div>
          </BigBtn>
          <SmallCol $w={67}>
            <SmallBtn $indent={1}>
              <NewIcon />
              New
            </SmallBtn>
            <SmallBtn $indent={1}>
              <SaveIcon />
              Save
            </SmallBtn>
            <SmallBtn $off $indent={3}>
              <DeleteIcon />
              Delete
              <Caret $off />
            </SmallBtn>
          </SmallCol>
          <SmallCol $w={72} $top={8}>
            <SmallBtn $indent={3}>
              <SpellIcon />
              Spelling
            </SmallBtn>
            <SmallBtn $off $h={34} $indent={3}>
              <MoreIcon />
              More
              <Caret $off />
            </SmallBtn>
          </SmallCol>
        </GroupBody>
        <GroupLabel>Records</GroupLabel>
      </Group>
      <Group $w={117}>
        <GroupBody $pad={5}>
          <BigBtn $w={41}>
            <BigIcon>
              <BinocularsIcon />
            </BigIcon>
            Find
          </BigBtn>
          <SmallCol $w={66}>
            <SmallBtn $indent={4}>
              <ReplaceIcon />
              Replace
            </SmallBtn>
            <SmallBtn $indent={6}>
              <GoToIcon />
              Go To
              <Caret />
            </SmallBtn>
            <SmallBtn $indent={8}>
              <SelectIcon />
              Select
              <Caret />
            </SmallBtn>
          </SmallCol>
        </GroupBody>
        <GroupLabel>Find</GroupLabel>
      </Group>
      <Group $w={118}>
        <GroupBody>
          <BigBtn $w={56} $off>
            <BigIcon>
              <SizeFitIcon />
            </BigIcon>
            Size to
            <div>Fit Form</div>
          </BigBtn>
          <BigBtn $w={52}>
            <BigIcon>
              <SwitchIcon />
            </BigIcon>
            Switch
            <div>
              Windows
              <Caret />
            </div>
          </BigBtn>
        </GroupBody>
        <GroupLabel>Window</GroupLabel>
      </Group>
      <Group $w={352}>
        <GroupBody>
          <FormatCol>
            <FormatRow>
              <FontBox $w={140}>
                <Caret />
              </FontBox>
              <FontBox $w={55}>
                <Caret />
              </FontBox>
              <ToolSpace $w={7} />
              <ListGlyph />
              <ToolSpace $w={5} />
              <ListGlyph numbered />
              <ToolSpace $w={7} />
              <ToolSep />
              <ToolSpace $w={9} />
              <IndentGlyph />
              <ToolSpace $w={5} />
              <IndentGlyph flip />
              <ToolSpace $w={8} />
              <ToolSep />
              <ToolSpace $w={7} />
              <ParaGlyph />
              <Caret $off />
            </FormatRow>
            <FormatRow>
              <ToolSpace $w={1} />
              <ToolGlyph $serif>B</ToolGlyph>
              <ToolGlyph $serif $italic>
                I
              </ToolGlyph>
              <ToolGlyph $under>U</ToolGlyph>
              <ToolSpace $w={6} />
              <ToolSep />
              <ToolSpace $w={9} />
              <FontColorGlyph />
              <Caret $off />
              <ToolSpace $w={9} />
              <HighlightGlyph />
              <Caret $off />
              <ToolSpace $w={11} />
              <BucketGlyph />
              <Caret $off />
              <ToolSpace $w={8} />
              <ToolSep />
              <ToolSpace $w={7} />
              <AlignGlyph mode="l" />
              <ToolSpace $w={7} />
              <AlignGlyph mode="c" />
              <ToolSpace $w={8} />
              <AlignGlyph mode="r" />
              <ToolSpace $w={8} />
              <ToolSep />
              <ToolSpace $w={6} />
              <GridGlyph />
              <Caret $off />
              <ToolSpace $w={7} />
              <ToolSep />
              <ToolSpace $w={7} />
              <AltGridGlyph />
              <Caret $off />
            </FormatRow>
          </FormatCol>
        </GroupBody>
        <GroupLabel $shift={20}>
          Text Formatting
          <DialogLauncher />
        </GroupLabel>
      </Group>
    </Ribbon>

    <FormFrame>
      <Header>
        <Brand>
          <LogoIcon />
          <BrandText>
            <BrandName>HR Tracking Database Software™</BrandName>
            <BrandCopy>©2009-2013 DB-Pros, Inc.</BrandCopy>
          </BrandText>
          <SortHint>(cliquez sur l'en-tête pour trier)</SortHint>
        </Brand>
        <HeadLabel $col={2} $bottom={3}>Nom</HeadLabel>
        <HeadLabel $col={3} $bottom={3}>Prénom</HeadLabel>
        <HeadLabel $col={4} $bottom={3}>Adresse</HeadLabel>
        <HeadLabel $col={5} $bottom={3}>Lieu</HeadLabel>
        <HeadLabel $col={6} $bottom={3}>Téléphone mobile</HeadLabel>
        <HeadLabel $col={7} $bottom={-1}>
          Numéro
          <br />
          d'assurance
          <br />
          sociale
        </HeadLabel>
        <HeadLabel $col={8} $bottom={15}>
          Date de
          <br />
          naissance
        </HeadLabel>
        <HeadLabel $col={9} $bottom={15}>
          ID de
          <br />
          l'employé
        </HeadLabel>
        <HeadLabel $col={10} $bottom={3}>
          Heures
          <br />
          par
          <br />
          semaine
        </HeadLabel>
        <HeadLabel $col={11} $bottom={3}>Statut</HeadLabel>
      </Header>

      {employees.map((e, i) => {
        const RowKind = i === 0 ? RowHeadTop : Row;
        return (
          <RowKind key={i}>
            <Selector>{i === 0 ? <RowArrow /> : i === employees.length - 1 ? "✳" : null}</Selector>
            <Cell>{e.nom}</Cell>
            <Cell>{e.prenom}</Cell>
            <Cell>{e.adresse}</Cell>
            <Cell>{i === 0 ? "NYC" : ""}</Cell>
            <Cell>{i === 0 ? "917-251-2001" : ""}</Cell>
            <Cell>{i === 0 ? "554-555-7000" : ""}</Cell>
            <Cell>{i === 0 ? "08/10/1990" : ""}</Cell>
            <Cell />
            <Cell $right>{e.heures}</Cell>
            <Cell>{e.statut}</Cell>
            <Filler $grey={i % 2 === 1} />
          </RowKind>
        );
      })}
      <Blank />
      <FilterRow>
        <FilterCell $col={2} $inset={3} />
        <FilterCell $col={3} />
        <FilterCell $col={4} />
        <FilterCombo $col={5}>
          &lt;All&gt;
          <DropBtn />
        </FilterCombo>
        <FilterCell $col={7} />
        <FilterCell $col={9} />
        <FilterCombo $col={11}>
          &lt;All&gt;
          <DropBtn />
        </FilterCombo>
      </FilterRow>

      <Lower>
        <LeftPane>
          <TabStrip>
            {sheetTabs.map(([label, w]) => (
              <SheetTab key={label} $w={w}>
                {label}
              </SheetTab>
            ))}
            <ActiveTab $w={199}>Récompenses / Reconnaissance</ActiveTab>
            <TabScroll>
              <ScrollBtn>◀</ScrollBtn>
              <ScrollBtn>▶</ScrollBtn>
            </TabScroll>
          </TabStrip>
          <Panel>
            <SubForm>
              <SubHead>
                <SubLabel $w={104} $red>Date de récompense</SubLabel>
                <SubLabel $w={224}>Résumé de reconnaissance</SubLabel>
                <SubLabel $w={132}>Type de récompense</SubLabel>
                <SubLabel $w={132}>Infos sur la récompense</SubLabel>
              </SubHead>
              <SubRow>
                <SubSel>
                  <RowArrow />
                </SubSel>
                <SubCell $w={104} $right>11/01/2014</SubCell>
                <SubCell $w={224} $italic>Projet achevé en avance</SubCell>
                <SubCell $w={132}>Bonus Vacation Day</SubCell>
                <SubCell $w={176} $italic>Supplémentaire</SubCell>
              </SubRow>
              <SubSpace />
              <SubFoot>
                <RecordCount>1</RecordCount>enregistrement(s)
              </SubFoot>
            </SubForm>
            <ActionRow>
              <Btn $w={238} $h={35}>
                {"Ajouter un enregistrement de \nrécompense / reconnaissance"}
              </Btn>
              <Btn $w={243} $h={35} $blue>
                {"Ouvrir un enregistrement de \nrécompense / reconnaissance"}
              </Btn>
            </ActionRow>
          </Panel>
        </LeftPane>
        <RightPane>
          <Btn $w={118} $h={22}>{"Effacer les filtres "}</Btn>
          <CountLine>
            <RecordCount>11</RecordCount>enregistrement(s)
          </CountLine>
          <StackCol $top={42} $left={23} $gap={5}>
            <Btn $w={123} $h={23}>Ajouter un employé</Btn>
            <Btn $w={123} $h={23}>
              <span>
                <u>E</u>nregistrer
              </span>
            </Btn>
            <Btn $w={123} $h={23}>
              <span>
                <u>S</u>upprimer
              </span>
            </Btn>
            <Btn $w={123} $h={23}>
              <span>
                <u>F</u>ermer
              </span>
            </Btn>
          </StackCol>
          <StackCol $top={109} $left={3} $gap={9}>
            <Btn $w={195} $h={27}>&lt;&lt; Retour à l'onglet Principal</Btn>
            <Btn $w={195} $h={27}>Aller à la dernière page &gt;&gt;</Btn>
          </StackCol>
        </RightPane>
      </Lower>
    </FormFrame>

    <StatusBar>
      <StatusLeft>Form View</StatusLeft>
      <div>Num Lock</div>
    </StatusBar>
    <Taskbar>
      <StartSlot>
        <OrbIcon />
      </StartSlot>
      <TaskBtn $w={58}>
        <FirefoxIcon />
      </TaskBtn>
      <TaskBtn $w={55}>
        <ExplorerIcon />
      </TaskBtn>
      <TaskBtn $w={63} $plain $gap={0}>
        <WmpIcon />
      </TaskBtn>
      <TaskBtn $w={66} $plain $gap={0}>
        <GopherIcon />
      </TaskBtn>
      <TaskBtn $w={59}>
        <AgentIcon />
      </TaskBtn>
      <TaskBtn $w={59}>
        <InfinityIcon />
      </TaskBtn>
      <TaskBtn $w={59} $active>
        <AccessTaskIcon />
      </TaskBtn>
      <Tray>
        <TrayIcon $w={24}>
          <UpGlyph />
        </TrayIcon>
        <TrayIcon $w={24}>
          <TrayPrinter />
        </TrayIcon>
        <TrayIcon $w={24}>
          <TrayFlag />
        </TrayIcon>
        <TrayIcon $w={24}>
          <TrayNetwork />
        </TrayIcon>
        <TrayIcon $w={24}>
          <TraySpeaker />
        </TrayIcon>
        <TrayIcon $w={24}>
          <TrayBox />
        </TrayIcon>
        <Clock>
          2:43 PM
          <br />
          2/23/2014
        </Clock>
        <ShowDesktop />
      </Tray>
    </Taskbar>

    <Dialog>
      <DialogTitle>
        <FormGlyph />
        <DialogName>Ajouter un enregistrement de reconnaissance</DialogName>
        <CloseGlyph />
      </DialogTitle>
      <DialogBody>
        <FieldLabel>Employé :</FieldLabel>
        <FieldWrap>
          <Field $w={209} $h={21} $bg="#d4d4d4">Smith, Mike</Field>
        </FieldWrap>
        <FieldLabel $top={3}>Date de récompense :</FieldLabel>
        <FieldWrap $top={3}>
          <Field $w={74} $h={21} $bare>11/01/2014</Field>
        </FieldWrap>
        <FieldLabel $top={8}>Reconnaissance :</FieldLabel>
        <FieldWrap $top={8}>
          <Field $w={289} $h={60}>Projet achevé en avance</Field>
        </FieldWrap>
        <FieldLabel $top={8}>Type de récompense :</FieldLabel>
        <FieldWrap $top={8}>
          <Field $w={209} $h={21}>
            Bonus Vacation Day
            <FieldDrop />
          </Field>
          <DotsBtn $w={29} $h={20}>...</DotsBtn>
        </FieldWrap>
        <FieldLabel $top={3}>{"Infos sur la\nrécompense :"}</FieldLabel>
        <FieldWrap $top={3}>
          <Field $w={289} $h={60} $bg="#00ff00">Supplémentaire</Field>
        </FieldWrap>
        <DialogActions>
          <Btn $w={147} $h={22}>
            <span>
              <u>E</u>nregistrer et fermer
            </span>
          </Btn>
          <Btn $w={95} $h={22}>
            <span>
              <u>A</u>nnuler
            </span>
          </Btn>
        </DialogActions>
      </DialogBody>
    </Dialog>
    <CursorSlot>
      <PointerIcon />
    </CursorSlot>
  </Screen>
);

export default App;
